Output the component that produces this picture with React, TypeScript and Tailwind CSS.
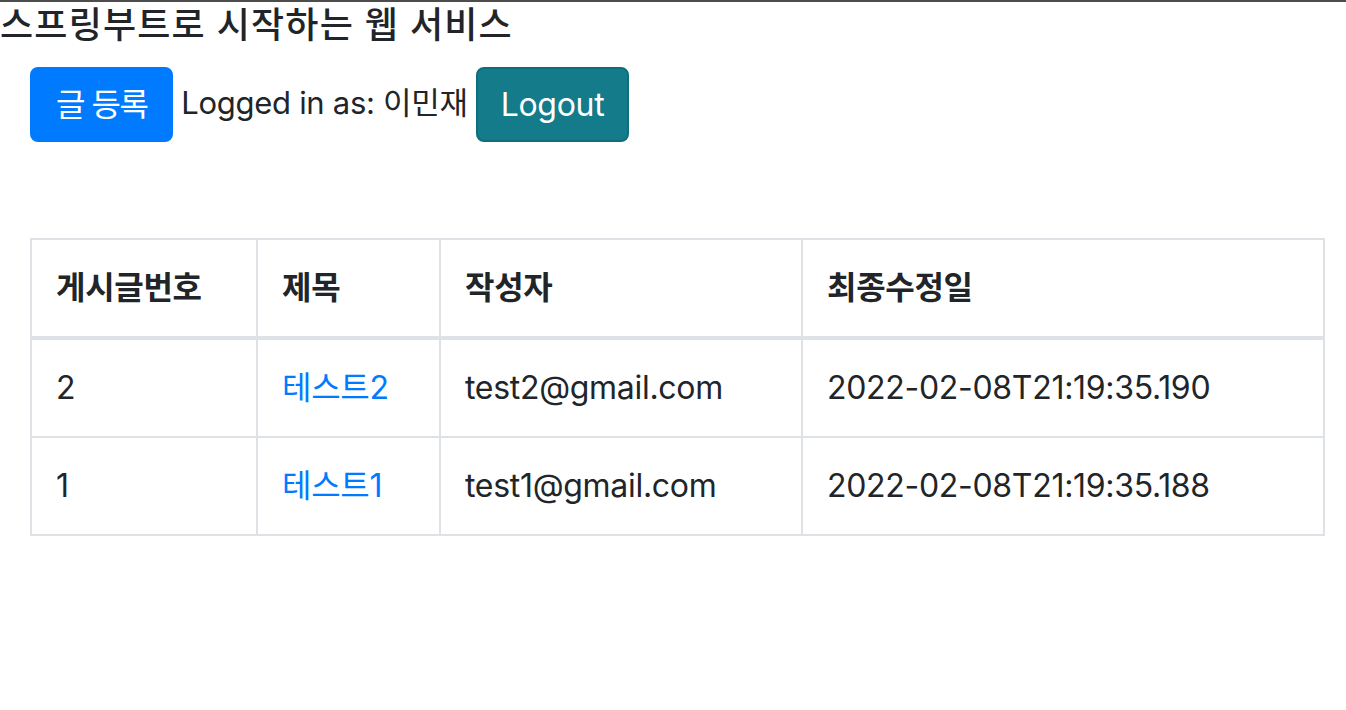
const posts = [
  { id: 2, title: '테스트2', author: 'test2@gmail.com', modified: '2022-02-08T21:19:35.190' },
  { id: 1, title: '테스트1', author: 'test1@gmail.com', modified: '2022-02-08T21:19:35.188' },
]

const font = "font-['Inter','Noto_Sans_CJK_KR',sans-serif]"

export default function App() {
  return (
    <div className={`min-h-[710px] bg-white text-[#212529] border-t-2 border-[#4d4d4d] ${font}`}>
      <h1 className="text-[36px] font-medium leading-[46px] mb-[19px] tracking-[1.2px]">스프링부트로 시작하는 웹 서비스</h1>

      <div className="pl-[30px] pr-[21px]">
        {/* action bar */}
        <div className="flex items-center gap-[8px] text-[32px] leading-[48px] tracking-[-0.3px]">
          <button className="h-[75px] px-[24px] rounded-[8px] border-2 border-[#007bff] bg-[#007bff] text-white tracking-[-1.5px]">
            글 등록
          </button>
          <span className="-mt-[4px] text-[31px]">Logged in as: 이민재</span>
          <button className="h-[75px] px-[23px] rounded-[8px] border-2 border-[#0f6e7c] bg-[#137b89] text-white">
            Logout
          </button>
        </div>

        {/* post list */}
        <table className="mt-[96px] w-full border-collapse text-[32px] leading-[48px] tracking-[-0.3px] text-left">
          <thead>
            <tr className="font-bold">
              <th className="w-[226px] border-2 border-b-4 border-[#dee2e6] px-[24px] py-[24px]">게시글번호</th>
              <th className="w-[183px] border-2 border-b-4 border-[#dee2e6] px-[24px] py-[24px]">제목</th>
              <th className="w-[362px] border-2 border-b-4 border-[#dee2e6] px-[24px] py-[24px]">작성자</th>
              <th className="border-2 border-b-4 border-[#dee2e6] px-[24px] py-[24px]">최종수정일</th>
            </tr>
          </thead>
          <tbody>
            {posts.map((p) => (
              <tr key={p.id}>
                <td className="border-2 border-[#dee2e6] px-[24px] py-[24px]">{p.id}</td>
                <td className="border-2 border-[#dee2e6] px-[24px] py-[24px]">
                  <a href="#" className="text-[#007bff]">{p.title}</a>
                </td>
                <td className="border-2 border-[#dee2e6] px-[24px] py-[24px]">{p.author}</td>
                <td className="border-2 border-[#dee2e6] px-[24px] py-[24px]">{p.modified}</td>
              </tr>
            ))}
          </tbody>
        </table>
      </div>
    </div>
  )
}
